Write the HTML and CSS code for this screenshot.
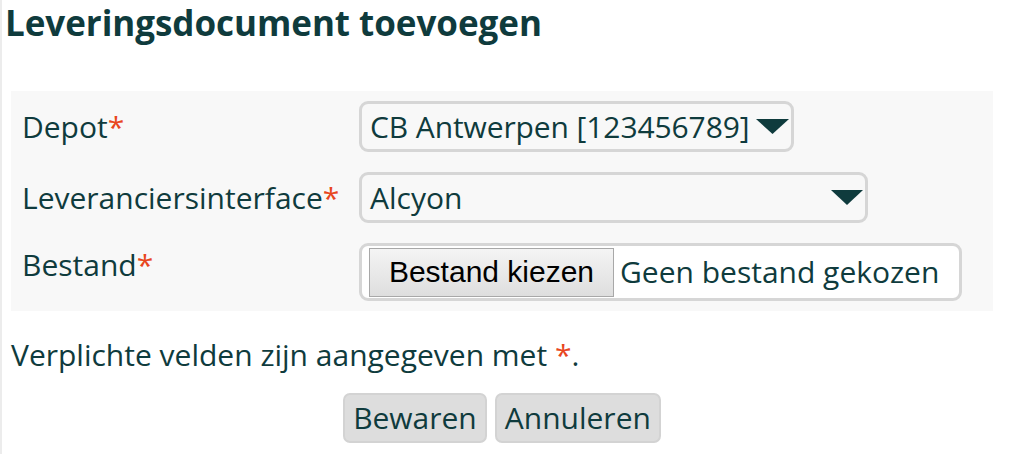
FILE: index.html
```html
<!DOCTYPE html>
<html lang="nl">
<head>
<meta charset="utf-8">
<title>Leveringsdocument toevoegen</title>
<link rel="stylesheet" href="styles.css">
</head>
<body>
<div class="page">
  <h1 class="title">Leveringsdocument toevoegen</h1>
  <div class="panel">
    <div class="label">Depot<span class="req">*</span></div>
    <div class="field">
      <div class="select select-depot">
        <span class="select-text">CB Antwerpen [123456789]</span>
        <svg class="arrow" width="33" height="15" viewBox="0 0 33 15"><polygon points="0,0 33,0 16.5,15" fill="#0f3b3d"/></svg>
      </div>
    </div>
    <div class="label">Leveranciersinterface<span class="req">*</span></div>
    <div class="field">
      <div class="select select-iface">
        <span class="select-text">Alcyon</span>
        <svg class="arrow" width="32" height="15" viewBox="0 0 32 15"><polygon points="0,0 32,0 16,15" fill="#0f3b3d"/></svg>
      </div>
    </div>
    <div class="label label-top">Bestand<span class="req">*</span></div>
    <div class="field">
      <div class="file">
        <button class="file-btn" type="button">Bestand kiezen</button>
        <span class="file-text">Geen bestand gekozen</span>
      </div>
    </div>
  </div>
  <p class="note">Verplichte velden zijn aangegeven met <span class="req">*</span>.</p>
  <div class="actions">
    <button class="btn" type="button">Bewaren</button>
    <button class="btn" type="button">Annuleren</button>
  </div>
</div>
</body>
</html>
```
FILE: styles.css
```css
html, body {
  margin: 0;
  padding: 0;
  background: #fff;
}
body {
  font-family: "Open Sans", "Noto Sans", sans-serif;
  color: #0f3b3d;
}
.page {
  border-left: 2px solid #ececec;
  min-height: 454px;
  box-sizing: border-box;
  padding: 0 18px 0 3px;
}
.title {
  margin: 0;
  padding: 0;
  font-size: 35px;
  font-weight: 700;
  line-height: 46px;
  height: 91px;
  white-space: nowrap;
  letter-spacing: -0.05px;
}
.panel {
  margin-left: 6px;
  background: #f8f8f8;
  display: grid;
  grid-template-columns: 337px max-content;
  row-gap: 20px;
  padding: 10px 11px;
  font-size: 30px;
}
.label {
  display: flex;
  align-items: center;
  line-height: 40px;
  white-space: nowrap;
}
.label-top {
  align-items: flex-start;
  padding-top: 2px;
}
.req {
  color: #e8461e;
}
.select {
  display: flex;
  align-items: center;
  box-sizing: border-box;
  height: 51px;
  border: 3px solid #d6d6d6;
  border-radius: 9px;
  padding: 0 2px 0 8px;
  background: #f8f8f8;
}
.select-depot { width: 435px; }
.select-iface { width: 509px; }
.select-text {
  flex: 1;
  min-width: 0;
  line-height: 40px;
  white-space: nowrap;
}
.select-depot .select-text {
  letter-spacing: -0.1px;
}
.arrow {
  display: block;
  flex-shrink: 0;
  margin-left: 4px;
  margin-bottom: 1px;
}
.file {
  display: flex;
  align-items: center;
  box-sizing: border-box;
  width: 603px;
  height: 58px;
  border: 3px solid #d6d6d6;
  border-radius: 9px;
  padding: 0 7px;
  background: #fff;
}
.file-btn {
  font-family: "Liberation Sans", Arial, sans-serif;
  font-size: 30px;
  color: #000;
  height: 49px;
  width: 245px;
  border: 1px solid #a8a8a8;
  background: linear-gradient(#f4f4f4, #dedede);
  padding: 0;
  margin-right: 6px;
}
.file-text {
  line-height: 40px;
  white-space: nowrap;
}
.note {
  margin: 0 0 0 6px;
  padding: 24px 0 0 0;
  font-size: 30px;
  line-height: 40px;
}
.actions {
  margin-left: 6px;
  display: flex;
  justify-content: center;
  gap: 8px;
  padding-top: 18px;
}
.btn {
  font-family: "Open Sans", "Noto Sans", sans-serif;
  font-size: 30px;
  color: #0f3b3d;
  background: #dddddd;
  border: 2px solid #d3d3d3;
  border-radius: 7px;
  height: 50px;
  padding: 0 8px;
  line-height: 40px;
}
```
